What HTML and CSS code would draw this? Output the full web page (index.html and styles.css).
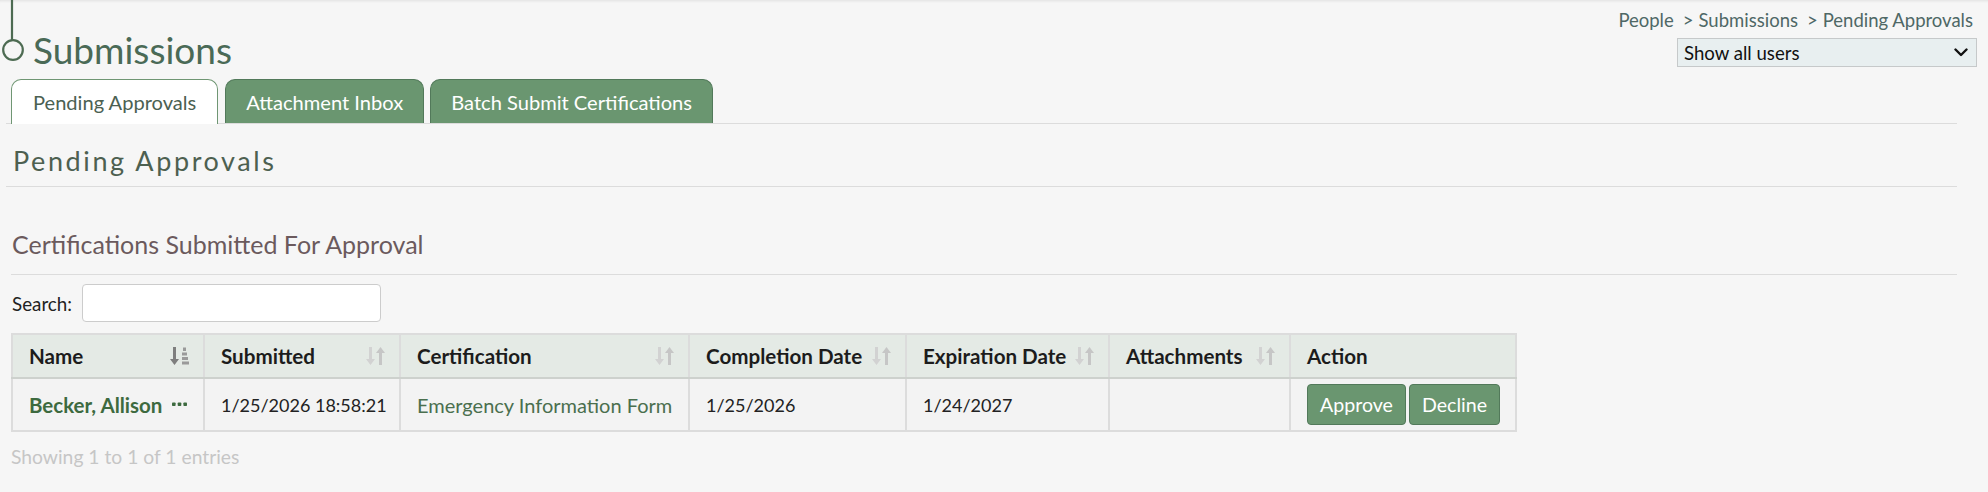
FILE: index.html
```html
<!DOCTYPE html>
<html lang="en">
<head>
<meta charset="utf-8">
<title>Submissions</title>
<link rel="stylesheet" href="styles.css">
</head>
<body>
<div class="page">
  <header class="header">
    <div class="title-wrap">
      <svg class="title-deco" width="26" height="71" viewBox="0 0 26 71">
        <line x1="12" y1="0" x2="12" y2="40" stroke="#4d6b52" stroke-width="2.2"/>
        <circle cx="13" cy="50" r="9.8" fill="none" stroke="#4d6b52" stroke-width="2.2"/>
      </svg>
      <h1 class="title">Submissions</h1>
    </div>
    <div class="header-right">
      <nav class="crumbs">
        <a class="crumb">People</a><span class="crumb-sep">&gt;</span><a class="crumb">Submissions</a><span class="crumb-sep">&gt;</span><a class="crumb">Pending Approvals</a>
      </nav>
      <div class="select-wrap">
        <select class="user-select">
          <option>Show all users</option>
        </select>
        <svg class="select-chev" width="14" height="9" viewBox="0 0 14 9"><path d="M1.5 1.5 L7 7 L12.5 1.5" fill="none" stroke="#111" stroke-width="2.4" stroke-linecap="round" stroke-linejoin="round"/></svg>
      </div>
    </div>
  </header>

  <main class="content">
    <div class="tabs">
      <a class="tab tab-active">Pending Approvals</a>
      <a class="tab">Attachment Inbox</a>
      <a class="tab">Batch Submit Certifications</a>
    </div>

    <h2 class="section-title">Pending Approvals</h2>

    <section class="panel">
      <h3 class="panel-title">Certifications Submitted For Approval</h3>

      <div class="search-row">
        <label class="search-label">Search:</label>
        <input class="search-input" type="text">
      </div>

      <table class="grid">
        <thead>
          <tr>
            <th class="c-name"><div class="th-in"><span>Name</span>
              <svg class="sort-icon" width="22" height="19" viewBox="0 0 22 19">
                <path d="M4 0 H7 V12 H10 L5.5 18 L1 12 H4 Z" fill="#7e7e7e"/>
                <rect x="14" y="0.5" width="3" height="3.5" fill="#9a9a9a"/>
                <rect x="13" y="5.5" width="5" height="3" fill="#9a9a9a"/>
                <rect x="13" y="10" width="6" height="3" fill="#9a9a9a"/>
                <rect x="13" y="14.5" width="7" height="3" fill="#9a9a9a"/>
              </svg></div></th>
            <th class="c-sub"><div class="th-in"><span>Submitted</span>
              <svg class="sort-icon" width="22" height="19" viewBox="0 0 22 19">
                <path d="M4 0 H7 V12 H10 L5.5 18 L1 12 H4 Z" fill="#d2d2d2"/>
                <path d="M14 18 H17 V6 H20 L15.5 0 L11 6 H14 Z" fill="#c6c6c6"/>
              </svg></div></th>
            <th class="c-cert"><div class="th-in"><span>Certification</span>
              <svg class="sort-icon" width="22" height="19" viewBox="0 0 22 19">
                <path d="M4 0 H7 V12 H10 L5.5 18 L1 12 H4 Z" fill="#d2d2d2"/>
                <path d="M14 18 H17 V6 H20 L15.5 0 L11 6 H14 Z" fill="#c6c6c6"/>
              </svg></div></th>
            <th class="c-comp"><div class="th-in"><span>Completion Date</span>
              <svg class="sort-icon" width="22" height="19" viewBox="0 0 22 19">
                <path d="M4 0 H7 V12 H10 L5.5 18 L1 12 H4 Z" fill="#d2d2d2"/>
                <path d="M14 18 H17 V6 H20 L15.5 0 L11 6 H14 Z" fill="#c6c6c6"/>
              </svg></div></th>
            <th class="c-exp"><div class="th-in"><span>Expiration Date</span>
              <svg class="sort-icon" width="22" height="19" viewBox="0 0 22 19">
                <path d="M4 0 H7 V12 H10 L5.5 18 L1 12 H4 Z" fill="#d2d2d2"/>
                <path d="M14 18 H17 V6 H20 L15.5 0 L11 6 H14 Z" fill="#c6c6c6"/>
              </svg></div></th>
            <th class="c-att"><div class="th-in"><span>Attachments</span>
              <svg class="sort-icon" width="22" height="19" viewBox="0 0 22 19">
                <path d="M4 0 H7 V12 H10 L5.5 18 L1 12 H4 Z" fill="#d2d2d2"/>
                <path d="M14 18 H17 V6 H20 L15.5 0 L11 6 H14 Z" fill="#c6c6c6"/>
              </svg></div></th>
            <th class="c-act"><div class="th-in"><span>Action</span></div></th>
          </tr>
        </thead>
        <tbody>
          <tr>
            <td><div class="name-cell"><a class="person">Becker, Allison</a>
              <svg class="more" width="15" height="5" viewBox="0 0 15 5"><rect x="0" y="0.5" width="3.6" height="3.6" rx="0.8" fill="#3d6a3f"/><rect x="5.7" y="0.5" width="3.6" height="3.6" rx="0.8" fill="#3d6a3f"/><rect x="11.4" y="0.5" width="3.6" height="3.6" rx="0.8" fill="#3d6a3f"/></svg></div></td>
            <td class="num">1/25/2026 18:58:21</td>
            <td><a class="cert-link">Emergency Information Form</a></td>
            <td class="num">1/25/2026</td>
            <td class="num">1/24/2027</td>
            <td></td>
            <td class="actions"><button class="btn">Approve</button><button class="btn">Decline</button></td>
          </tr>
        </tbody>
      </table>

      <div class="info">Showing 1 to 1 of 1 entries</div>
    </section>
  </main>
</div>
</body>
</html>
```

FILE: styles.css
```css
html, body {
  margin: 0;
  padding: 0;
  background: #f6f6f6;
}

body {
  font-family: "Lato", "Liberation Sans", sans-serif;
  color: #222;
  font-size: 20px;
}

.page {
  min-height: 492px;
  box-shadow: inset 0 3px 3px -2px rgba(0, 0, 0, 0.09);
}

.header {
  display: flex;
  justify-content: space-between;
  align-items: flex-start;
  height: 79px;
}

.title-wrap {
  display: flex;
  align-items: flex-start;
}

.title-deco {
  display: block;
}

.title {
  margin: 28px 0 0 7px;
  font-size: 37px;
  line-height: 44px;
  font-weight: 400;
  color: #4a6a56;
}

.header-right {
  display: flex;
  flex-direction: column;
  align-items: flex-end;
  padding-right: 11px;
  padding-top: 9px;
}

.crumbs {
  font-size: 18.5px;
  line-height: 22px;
  color: #4f6866;
  padding-right: 4px;
}

.crumb {
  color: #4f6866;
}

.crumb-sep {
  margin: 0 5px 0 9px;
}

.select-wrap {
  position: relative;
  margin-top: 7px;
}

.user-select {
  appearance: none;
  -webkit-appearance: none;
  display: block;
  width: 300px;
  height: 29px;
  margin: 0;
  padding: 0 0 0 6px;
  font-family: "Lato", "Liberation Sans", sans-serif;
  font-size: 18.6px;
  color: #111;
  background: #e8eff0;
  border: 1px solid #c6c9ca;
  border-radius: 0;
}

.select-chev {
  position: absolute;
  right: 9px;
  top: 10px;
  pointer-events: none;
}

.content {
  margin-left: 6px;
  width: 1951px;
}

.tabs {
  display: flex;
  gap: 6px;
  padding-left: 5px;
  border-bottom: 1px solid #dcdcdc;
  height: 44px;
}

.tab {
  display: flex;
  align-items: center;
  height: 44px;
  box-sizing: border-box;
  padding: 0 20px;
  font-size: 20.1px;
  color: #fff;
  background: #6a9670;
  border: 1px solid #52795a;
  border-bottom: none;
  border-radius: 10px 10px 0 0;
}

.tab-active {
  height: 45px;
  padding: 0 21px;
  margin-right: 1px;
  background: #fff;
  color: #4b6152;
  border-color: #6f9673;
  margin-bottom: -1px;
}

.section-title {
  margin: 0;
  padding: 22px 0 0 7px;
  height: 40px;
  font-size: 27px;
  line-height: 30px;
  font-weight: 400;
  letter-spacing: 2.6px;
  color: #4d6050;
  border-bottom: 1px solid #dcdcdc;
}

.panel {
  margin-left: 5px;
}

.panel-title {
  margin: 0;
  padding: 42px 0 0 1px;
  height: 45px;
  font-size: 25px;
  line-height: 30px;
  font-weight: 400;
  color: #6b5a5d;
  border-bottom: 1px solid #dcdcdc;
}

.search-row {
  display: flex;
  align-items: center;
  margin-top: 9px;
  height: 38px;
}

.search-label {
  font-size: 18.8px;
  color: #222;
  margin-left: 1px;
}

.search-input {
  margin-left: 10px;
  width: 299px;
  height: 38px;
  box-sizing: border-box;
  border: 1px solid #cccccc;
  border-radius: 4px;
  background: #fff;
}

.grid {
  margin-top: 11px;
  border-collapse: collapse;
  table-layout: fixed;
  width: 1504px;
  border: 2px solid #dcdcdc;
}

.grid th,
.grid td {
  border: 2px solid #dcdcdc;
  text-align: left;
  padding: 0 12px 0 16px;
  white-space: nowrap;
}

.grid th {
  background: #e4eae5;
  height: 42px;
  font-weight: 700;
  font-size: 20.6px;
  color: #1c1c1c;
  border-bottom: 2px solid #cdd1cd;
}

.grid td {
  height: 51px;
  background: #f3f3f3;
  font-size: 20px;
  color: #222;
}

.grid td.num {
  font-size: 18px;
}

.c-name { width: 162px; }
.c-sub { width: 166px; }
.c-cert { width: 259px; }
.c-comp { width: 187px; }
.c-exp { width: 173px; }
.c-att { width: 151px; }
.c-act { width: 196px; }

.th-in {
  display: flex;
  justify-content: space-between;
  align-items: center;
}

.sort-icon {
  display: block;
  flex: none;
}

.name-cell {
  display: flex;
  align-items: center;
  gap: 10px;
}

.person {
  font-weight: 700;
  font-size: 20.5px;
  color: #3d6a3f;
}

.more {
  display: block;
}

.cert-link {
  color: #4a6f4e;
}

.actions {
  padding-left: 15px;
}

.btn {
  height: 41px;
  padding: 0 12px;
  margin-right: 3px;
  font-family: "Lato", "Liberation Sans", sans-serif;
  font-size: 19.6px;
  color: #fff;
  background: #6a9670;
  border: 1px solid #52795a;
  border-radius: 4px;
  vertical-align: middle;
}

.info {
  margin-top: 13px;
  font-size: 19.3px;
  color: #c6c6c6;
}
```
